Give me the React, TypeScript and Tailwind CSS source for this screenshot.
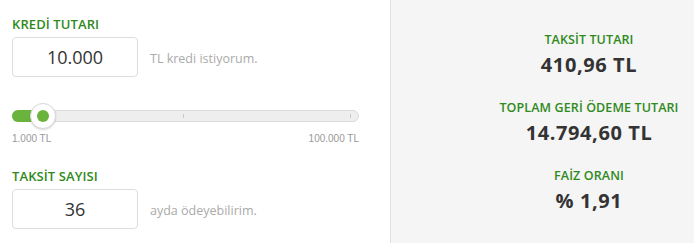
import React from "react";

const font = { fontFamily: '"Open Sans", "Noto Sans", sans-serif' };

function Label({ children }: { children: React.ReactNode }) {
  return (
    <div className="text-[13px] leading-[16px] font-semibold text-[#2f8a1c] tracking-[0.1px]">{children}</div>
  );
}

function Result({ label, value, first }: { label: string; value: string; first?: boolean }) {
  return (
    <div className={`flex flex-col items-center ${first ? "mt-[32px]" : "mt-[22px]"}`}>
      <div className="text-[12.5px] leading-[16px] font-semibold text-[#2f8a1c] tracking-[0.1px]">{label}</div>
      <div className="mt-[4px] text-[20px] leading-[26px] font-bold text-[#333] tracking-[0.6px]">{value}</div>
    </div>
  );
}

export default function App() {
  return (
    <div className="w-[694px] h-[243px] flex bg-white overflow-hidden" style={font}>
      <div className="w-[390px] px-3 flex flex-col">
        <div className="mt-[16px]">
          <Label>KREDİ TUTARI</Label>
        </div>
        <div className="mt-[5px] flex items-center">
          <div className="w-[126px] h-[40px] border border-[#ddd] rounded-[4px] flex items-center justify-center text-[18px] text-[#333]">
            10.000
          </div>
          <div className="ml-[12px] mt-[4px] text-[12.5px] text-[#aaa]">TL kredi istiyorum.</div>
        </div>
        <div className="mt-[33px] relative h-[12px] w-[347px]">
          <div className="absolute inset-0 rounded-full bg-[#eeeeee] border border-[#dcdcdc]"></div>
          <div className="absolute left-0 top-0 h-[12px] w-[34px] rounded-l-full bg-[#6ab43e]"></div>
          <div className="absolute left-[171px] top-[4px] w-px h-[4px] bg-[#c8c8c8]"></div>
          <div className="absolute left-[338px] top-[4px] w-px h-[4px] bg-[#c8c8c8]"></div>
          <div className="absolute left-[18px] top-[-7px] w-[26px] h-[26px] rounded-full bg-white border border-[#d8d8d8] shadow-[0_1px_2px_rgba(0,0,0,0.15)] flex items-center justify-center">
            <div className="w-[12px] h-[12px] rounded-full bg-[#6ab43e]"></div>
          </div>
        </div>
        <div className="mt-[11px] w-[347px] flex justify-between text-[10px] leading-[12px] text-[#999]" style={{ fontFamily: '"Liberation Sans", Arial, sans-serif' }}>
          <span>1.000 TL</span>
          <span>100.000 TL</span>
        </div>
        <div className="mt-[23px]">
          <Label>TAKSİT SAYISI</Label>
        </div>
        <div className="mt-[5px] flex items-center">
          <div className="w-[126px] h-[40px] border border-[#ddd] rounded-[4px] flex items-center justify-center text-[18px] text-[#333]">
            36
          </div>
          <div className="ml-[12px] mt-[4px] text-[12.5px] text-[#aaa]">ayda ödeyebilirim.</div>
        </div>
      </div>
      <div className="flex-1 bg-[#f5f5f5] border-l border-[#e2e2e2] flex flex-col items-center pl-[93px]">
        <Result first label="TAKSİT TUTARI" value="410,96 TL" />
        <Result label="TOPLAM GERİ ÖDEME TUTARI" value="14.794,60 TL" />
        <Result label="FAİZ ORANI" value="% 1,91" />
      </div>
    </div>
  );
}
